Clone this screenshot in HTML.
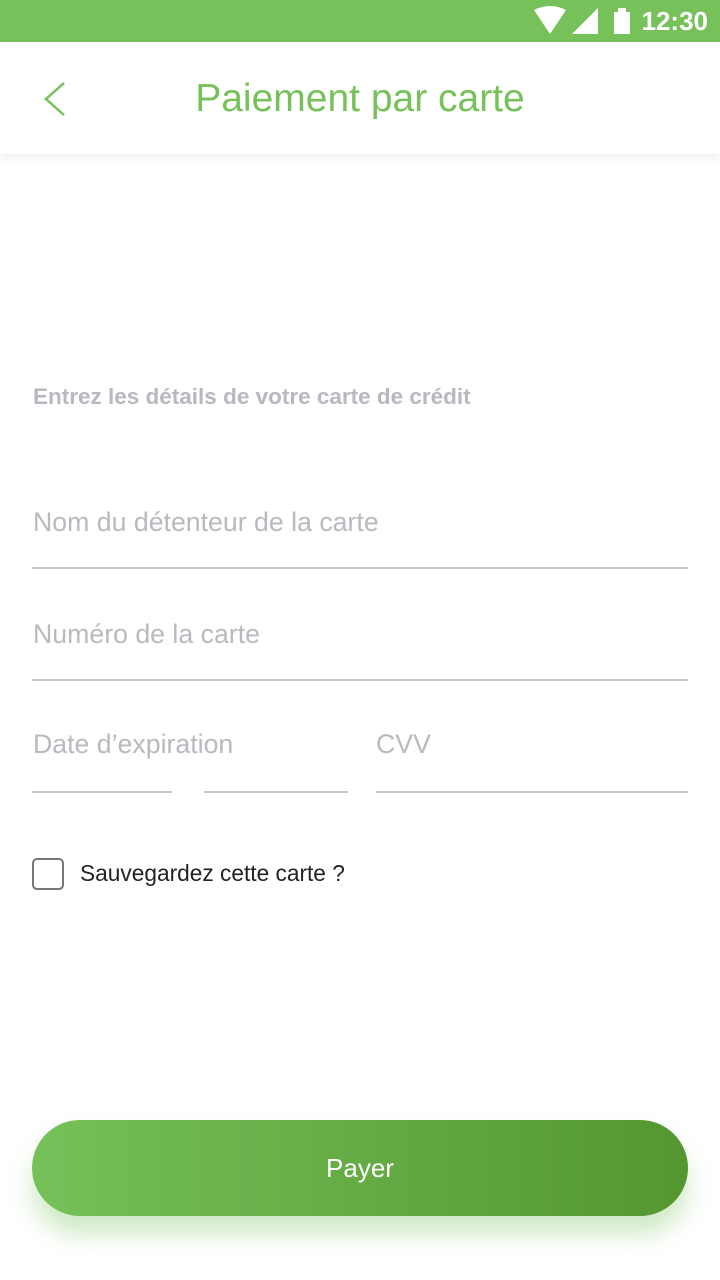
<!DOCTYPE html>
<html><head><meta charset="utf-8"><style>
*{margin:0;padding:0;box-sizing:border-box}
body{width:720px;height:1280px;background:#fff;font-family:"Liberation Sans",sans-serif;position:relative;overflow:hidden}
.sb{position:absolute;top:0;left:0;width:720px;height:42px;background:#76c159}
.time{position:absolute;right:12px;top:6px;color:#fff;font-size:26px;font-weight:bold}
.hdr{position:absolute;top:42px;left:0;width:720px;height:112px;background:#fff;box-shadow:0 4px 8px rgba(0,0,0,0.06)}
.title{position:absolute;top:77px;left:0;width:720px;text-align:center;color:#76c159;font-size:39px}
.lbl{position:absolute;left:33px;top:384px;color:#b7b8c0;font-size:22.5px;font-weight:bold}
.ph{position:absolute;color:#b9b9bf;font-size:26.7px}
.ln{position:absolute;height:2px;background:#c8c8cc}
.cb{position:absolute;left:32px;top:858px;width:32px;height:32px;border:2px solid #777;border-radius:5px}
.cbt{position:absolute;left:80px;top:860px;font-size:22.7px;color:#222}
.btn{position:absolute;left:32px;top:1120px;width:656px;height:96px;border-radius:48px;background:linear-gradient(90deg,#76c159,#549630);box-shadow:0 18px 24px rgba(118,193,89,0.35);color:#fff;font-size:26px;text-align:center;line-height:96px}
</style></head><body>
<div class="sb">
<svg style="position:absolute;left:532px;top:6px" width="120" height="30">
<path d="M2 4 Q18 -4 34 4 L18 28 Z" fill="#fff"/>
<path d="M40 28 L66 2 L66 28 Z" fill="#fff"/>
<rect x="82" y="6" width="16" height="22" fill="#fff"/><rect x="86" y="2" width="8" height="5" fill="#fff"/>
</svg>
<div class="time">12:30</div></div>
<div class="hdr"></div>
<svg style="position:absolute;left:0;top:0" width="100" height="140"><path d="M64 83 L46 99 L64 115" fill="none" stroke="#76c159" stroke-width="2.5"/></svg>
<div class="title">Paiement par carte</div>
<div class="lbl">Entrez les détails de votre carte de crédit</div>
<div class="ph" style="left:33px;top:507px">Nom du détenteur de la carte</div>
<div class="ln" style="left:32px;top:567px;width:656px"></div>
<div class="ph" style="left:33px;top:619px">Numéro de la carte</div>
<div class="ln" style="left:32px;top:679px;width:656px"></div>
<div class="ph" style="left:33px;top:729px">Date d’expiration</div>
<div class="ph" style="left:376px;top:729px">CVV</div>
<div class="ln" style="left:32px;top:791px;width:140px"></div>
<div class="ln" style="left:204px;top:791px;width:144px"></div>
<div class="ln" style="left:376px;top:791px;width:312px"></div>
<div class="cb"></div><div class="cbt">Sauvegardez cette carte ?</div>
<div class="btn">Payer</div>
</body></html>
